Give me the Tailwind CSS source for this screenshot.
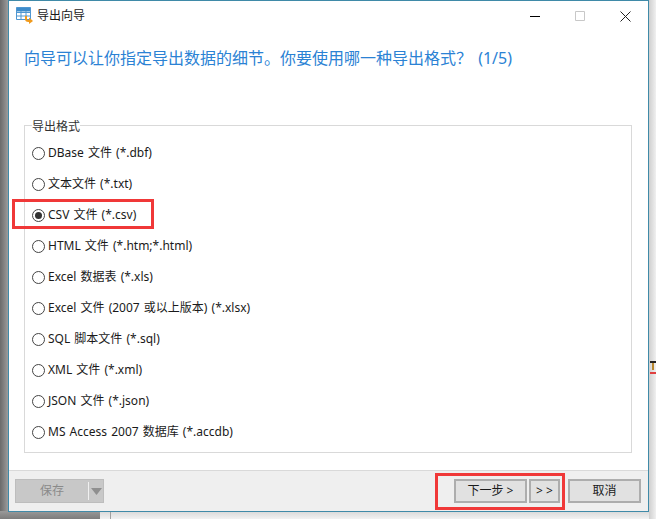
<!DOCTYPE html>
<html lang="zh">
<head>
<meta charset="utf-8"/>
<title>导出向导</title>
<script src="https://cdn.jsdelivr.net/npm/@tailwindcss/browser@4"></script>
</head>
<body class="bg-white">
<div class="relative w-[656px] h-[519px] overflow-hidden bg-[#f0f0f0] font-['Noto_Sans','Noto_Sans_CJK_SC',sans-serif] text-[12px] text-[#1a1a1a]">
  <!-- what lies behind the dialog -->
  <div class="absolute left-0 top-0 w-[8px] h-[519px] bg-gradient-to-r from-[#6a6a6a] to-[#9c9c9c]"></div>
  <div class="absolute left-0 top-[511px] w-[100px] h-[8px] bg-gradient-to-b from-[#9a9a9a] to-[#7c7c7c]"></div>
  <div class="absolute left-[100px] top-[511px] w-[556px] h-[8px] bg-gradient-to-b from-[#d8d8d8] to-[#f2f2f2]"></div>
  <div class="absolute left-[110px] top-[511px] w-px h-[8px] bg-[#a0a0a0]"></div>
  <div class="absolute left-[649px] top-0 w-[7px] h-[519px] bg-gradient-to-r from-[#cfcfcf] to-[#f0f0f0]"></div>
  <div class="absolute left-[650px] top-[361px] w-[6px] h-[2px] bg-[#222]"></div>
  <div class="absolute left-[652px] top-[363px] w-[2px] h-[7px] bg-[#b8862c]"></div>
  <div class="absolute left-[650px] top-[372px] w-[6px] h-[2px] bg-[#e04040]"></div>

  <!-- dialog -->
  <div class="relative ml-[8px] w-[641px] h-[512px] flex flex-col bg-white border border-[#3f8aa8]">
    <div class="h-[30px] flex items-center pl-[7px] shrink-0">
      <svg class="w-[17px] h-[17px] shrink-0 -mt-[1px]" viewBox="0 0 17 17" fill="none">
        <path d="M0.500 0.500h14v4h-14z" fill="#3d8ccb"/>
        <path d="M0.500 0.500h14v12h-14z M0.500 5.500h14 M0.500 9h14 M5 4v9 M10 4v9" stroke="#4f97d1" stroke-width="1"/>
        <path d="M10 9v3c0 1.500 1 2 2.500 2h1" stroke="#f09a1c" stroke-width="2"/>
        <path d="M13 10.500l4 3.500-4 3z" fill="#f09a1c"/>
      </svg>
      <span class="ml-[4px]">导出向导</span>
      <div class="ml-auto flex items-center">
        <svg class="w-[10px] h-[10px]" viewBox="0 0 10 10"><path d="M0 5.500h10" stroke="#000"/></svg>
        <svg class="ml-[35px] w-[10px] h-[10px]" viewBox="0 0 10 10"><path d="M0.500 0.500h9v9h-9z" fill="none" stroke="#c8c8c8"/></svg>
        <svg class="ml-[35px] mr-[17px] w-[11px] h-[11px]" viewBox="0 0 11 11"><path d="M0.500 0.500l10 10M10.500 0.500l-10 10" stroke="#222" stroke-width="1"/></svg>
      </div>
    </div>

    <div class="flex-1 flex flex-col pl-[15px] pr-[16px]">
      <p class="mt-[16px] text-[16px] leading-[22px] text-[#2b82d4] [word-spacing:2px]">向导可以让你指定导出数据的细节。你要使用哪一种导出格式？ (1/5)</p>

      <fieldset class="mt-[49px] h-[335px] border border-[#d9d9d9]">
        <legend class="ml-[7px] leading-[14px] text-[#333] translate-y-[2px]">导出格式</legend>
        <div class="flex flex-col gap-[13px] pl-[7px] pt-[12px] [word-spacing:1px]">
          <label class="flex items-center h-[18px]"><span class="w-[13px] h-[13px] rounded-full border border-[#444] bg-white"></span><span class="ml-[3px]">DBase 文件 (*.dbf)</span></label>
          <label class="flex items-center h-[18px]"><span class="w-[13px] h-[13px] rounded-full border border-[#444] bg-white"></span><span class="ml-[3px]">文本文件 (*.txt)</span></label>
          <label class="relative flex items-center h-[18px]">
            <span class="w-[13px] h-[13px] rounded-full border border-[#444] bg-white flex items-center justify-center"><span class="w-[7px] h-[7px] rounded-full bg-[#333]"></span></span>
            <span class="ml-[3px]">CSV 文件 (*.csv)</span>
            <span class="absolute left-[-20px] top-[-7px] w-[142px] h-[30px] border-[3px] border-[#f03838]"></span>
          </label>
          <label class="flex items-center h-[18px]"><span class="w-[13px] h-[13px] rounded-full border border-[#444] bg-white"></span><span class="ml-[3px]">HTML 文件 (*.htm;*.html)</span></label>
          <label class="flex items-center h-[18px]"><span class="w-[13px] h-[13px] rounded-full border border-[#444] bg-white"></span><span class="ml-[3px]">Excel 数据表 (*.xls)</span></label>
          <label class="flex items-center h-[18px]"><span class="w-[13px] h-[13px] rounded-full border border-[#444] bg-white"></span><span class="ml-[3px]">Excel 文件 (2007 或以上版本) (*.xlsx)</span></label>
          <label class="flex items-center h-[18px]"><span class="w-[13px] h-[13px] rounded-full border border-[#444] bg-white"></span><span class="ml-[3px]">SQL 脚本文件 (*.sql)</span></label>
          <label class="flex items-center h-[18px]"><span class="w-[13px] h-[13px] rounded-full border border-[#444] bg-white"></span><span class="ml-[3px]">XML 文件 (*.xml)</span></label>
          <label class="flex items-center h-[18px]"><span class="w-[13px] h-[13px] rounded-full border border-[#444] bg-white"></span><span class="ml-[3px]">JSON 文件 (*.json)</span></label>
          <label class="flex items-center h-[18px]"><span class="w-[13px] h-[13px] rounded-full border border-[#444] bg-white"></span><span class="ml-[3px]">MS Access 2007 数据库 (*.accdb)</span></label>
        </div>
      </fieldset>
    </div>

    <div class="relative h-[41px] shrink-0 flex items-start pt-[8px] pl-[6px] pr-[7px] bg-[#efefef] border-t border-[#d9d9d9]">
      <div class="w-[89px] h-[24px] flex items-center bg-[#c8c8c8] border border-[#bdbdbd] text-[#8a8a8a]">
        <span class="w-[72px] text-center">保存</span>
        <span class="w-px h-[18px] bg-[#f0f0f0]"></span>
        <svg class="ml-[2px] w-[11px] h-[7px]" viewBox="0 0 11 7"><path d="M0 0h11l-5.500 7z" fill="#8f8f8f"/></svg>
      </div>
      <button class="ml-auto w-[73px] h-[24px] bg-[#e1e1e1] border-2 border-[#adadad] leading-none">下一步 &gt;</button>
      <button class="ml-[2px] w-[31px] h-[24px] bg-[#e1e1e1] border-2 border-[#adadad] leading-none">&gt; &gt;</button>
      <button class="ml-[8px] w-[73px] h-[24px] bg-[#e1e1e1] border-2 border-[#adadad] leading-none">取消</button>
      <span class="absolute left-[426px] top-[2px] w-[130px] h-[37px] border-[3px] border-[#f03838]"></span>
    </div>
  </div>
</div>
</body>
</html>
